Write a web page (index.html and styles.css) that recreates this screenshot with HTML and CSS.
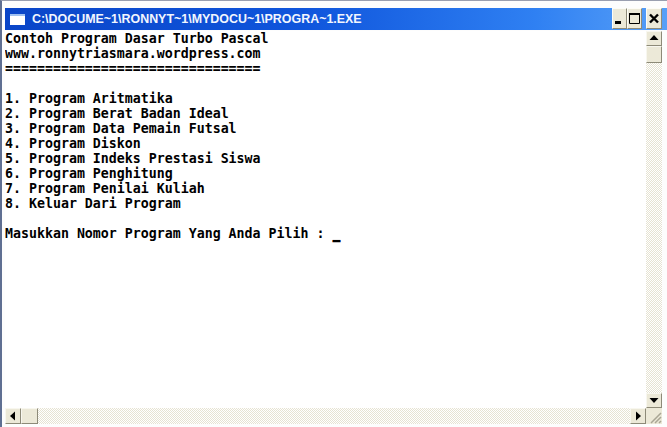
FILE: index.html
```html
<!DOCTYPE html>
<html lang="id">
<head>
<meta charset="utf-8">
<title>C:\DOCUME~1\RONNYT~1\MYDOCU~1\PROGRA~1.EXE</title>
<link rel="stylesheet" href="styles.css">
</head>
<body>
<div class="window">
  <header class="titlebar">
    <span class="app-icon"></span>
    <span class="title">C:\DOCUME~1\RONNYT~1\MYDOCU~1\PROGRA~1.EXE</span>
    <div class="caption-buttons">
      <button class="cap" aria-label="Minimize"><svg width="15" height="19" viewBox="0 0 15 19"><rect x="3" y="12" width="6" height="3" fill="#000"/></svg></button>
      <button class="cap" aria-label="Maximize"><svg width="15" height="19" viewBox="0 0 15 19"><path d="M2.5 4.5h10v10h-10z" fill="none" stroke="#000"/><rect x="2" y="4" width="11" height="2" fill="#000"/></svg></button>
      <button class="cap cap-close" aria-label="Close"><svg width="16" height="19" viewBox="0 0 16 19"><path d="M4 5.500l8 8M12 5.500l-8 8" stroke="#000" stroke-width="2.400" fill="none"/></svg></button>
    </div>
  </header>
  <div class="client">
    <div class="console-row">
      <pre class="console">Contoh Program Dasar Turbo Pascal
www.ronnytriasmara.wordpress.com
================================

1. Program Aritmatika
2. Program Berat Badan Ideal
3. Program Data Pemain Futsal
4. Program Diskon
5. Program Indeks Prestasi Siswa
6. Program Penghitung
7. Program Penilai Kuliah
8. Keluar Dari Program

Masukkan Nomor Program Yang Anda Pilih : <span class="cursor">_</span></pre>
      <div class="vscroll">
        <button class="sbtn"><svg width="16" height="15" viewBox="0 0 16 15"><path d="M8 4l-4.500 5h9z" fill="#000"/></svg></button>
        <div class="thumb-v"></div>
        <div class="track"></div>
        <button class="sbtn"><svg width="16" height="15" viewBox="0 0 16 15"><path d="M8 10l-4.500-5h9z" fill="#000"/></svg></button>
      </div>
    </div>
    <div class="hscroll">
      <button class="sbtn-h"><svg width="16" height="16" viewBox="0 0 16 16"><path d="M5 8l5-4.500v9z" fill="#000"/></svg></button>
      <div class="thumb-h"></div>
      <div class="track"></div>
      <button class="sbtn-h"><svg width="16" height="16" viewBox="0 0 16 16"><path d="M11 8l-5-4.500v9z" fill="#000"/></svg></button>
      <div class="grip"><svg width="16" height="16" viewBox="0 0 16 16"><path d="M15 5L5 15M15 9l-6 6M15 13l-2 2" stroke="#a9a695" stroke-width="1.500" fill="none"/></svg></div>
    </div>
  </div>
</div>
</body>
</html>
```
FILE: styles.css
```css
* { box-sizing: border-box; }
html, body { margin: 0; padding: 0; background: #fff; }
.window {
  width: 667px;
  height: 427px;
  display: flex;
  flex-direction: column;
  background: #fdfdfd;
  border-top: 1px solid #9a9fb0;
  border-left: 2px solid #5f6f92;
  padding: 7px 0 3px 3px;
  overflow: hidden;
}
.titlebar {
  height: 22px;
  flex: none;
  display: flex;
  align-items: center;
  background: linear-gradient(90deg, #0a45c8 0%, #0f55dc 45%, #2f80f2 80%, #58a0f8 100%);
  padding-left: 5px;
}
.app-icon {
  width: 15px;
  height: 11px;
  background: #fff;
  border-top: 2px solid #9fc0f0;
  flex: none;
  margin-right: 7px;
}
.title {
  font: 700 12.45px/22px "Liberation Sans", Arial, sans-serif;
  color: #f2f6fe;
  flex: 1;
  white-space: nowrap;
}
.caption-buttons {
  display: flex;
  height: 21px;
  flex: none;
  margin-top: -1px;
}
.cap {
  width: 15px;
  height: 21px;
  padding: 0;
  border: 1px solid;
  border-color: #fdfcf6 #8d8a78 #8d8a78 #fdfcf6;
  background: #ece9d8;
  display: block;
}
.cap svg { display: block; margin: 0 -1px; }
.cap-close { width: 16px; margin-left: 4px; margin-right: 5px; }
.client {
  flex: 1;
  display: flex;
  flex-direction: column;
  min-height: 0;
  padding: 1px 5px 0 0;
}
.console-row {
  flex: 1;
  display: flex;
  min-height: 0;
}
.console {
  flex: 1;
  margin: 0;
  padding: 0;
  background: #fff;
  color: #000;
  font: 700 13.28px/15px "DejaVu Sans Mono", "Liberation Mono", monospace;
  overflow: hidden;
}
.cursor { text-shadow: 0 1px 0 #000; }
.vscroll {
  width: 16px;
  flex: none;
  display: flex;
  flex-direction: column;
}
.sbtn, .thumb-v, .sbtn-h, .thumb-h {
  padding: 0;
  flex: none;
  border: 1px solid;
  border-color: #f8f7ef #8d8a78 #8d8a78 #f8f7ef;
  background: #ece9d8;
  display: block;
}
.sbtn { width: 16px; height: 15px; }
.sbtn svg, .sbtn-h svg { display: block; margin: -1px; }
.thumb-v { width: 16px; height: 17px; }
.track {
  flex: 1;
  background-color: #f3f1e6;
  background-image: repeating-conic-gradient(#ffffff 0 25%, #e6e3d2 0 50%);
  background-size: 2px 2px;
}
.hscroll {
  height: 16px;
  flex: none;
  display: flex;
  background: #ece9d8;
}
.sbtn-h { width: 16px; height: 16px; }
.thumb-h { width: 17px; height: 16px; }
.grip { width: 16px; height: 16px; flex: none; background: #ece9d8; }
.grip svg { display: block; }
```
